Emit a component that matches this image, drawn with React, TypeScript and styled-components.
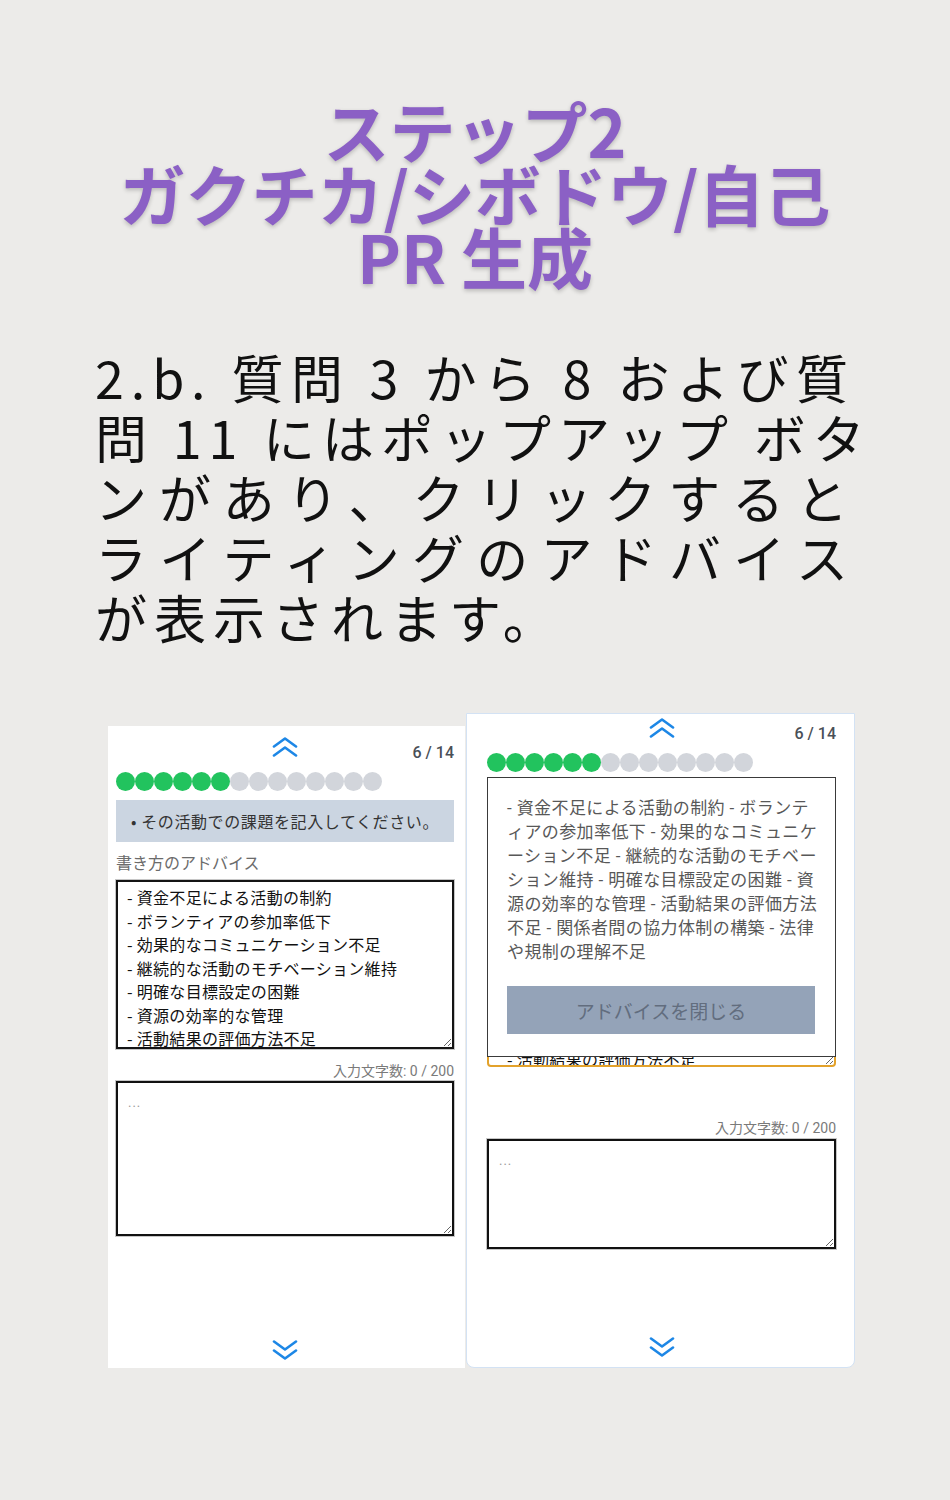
import styled, { createGlobalStyle } from 'styled-components';

const GlobalStyle = createGlobalStyle`
  body{
    margin:0;
    background:#ecebe9;
  }
`

const Page = styled.div`
  width:950px;
  min-height:1500px;
  box-sizing:border-box;
  padding-top:98px;
  font-family:"Noto Sans CJK JP", sans-serif;
`

const Title = styled.h1`
  margin:0;
  text-align:center;
  font-size:66px;
  line-height:63px;
  font-weight:700;
  color:#8b60c5;
  text-shadow:0 2px 4px rgba(0,0,0,0.22);
`

const Lead = styled.div`
  width:760px;
  margin:60px 0 0 95px;
  font-size:52px;
  line-height:60px;
  font-weight:400;
  letter-spacing:7px;
  color:#111;
`

const LeadLine = styled.div<{ $last?: boolean }>`
  white-space:nowrap;
  text-align:${p => (p.$last ? 'left' : 'justify')};
  text-align-last:${p => (p.$last ? 'left' : 'justify')};
`

const Shots = styled.div`
  display:flex;
  align-items:flex-end;
  gap:1px;
  margin:66px 0 0 108px;
`

const Phone = styled.div<{ $framed?: boolean }>`
  display:flex;
  flex-direction:column;
  box-sizing:border-box;
  background:#fff;
  width:${p => (p.$framed ? '389px' : '357px')};
  height:${p => (p.$framed ? '655px' : '642px')};
  padding:${p => (p.$framed ? '4px 18px 10px 20px' : '11px 11px 8px 8px')};
  border:${p => (p.$framed ? '1px solid #d3e2f4' : 'none')};
  border-radius:${p => (p.$framed ? '0 0 8px 8px' : '0')};
  font-family:Roboto, "Noto Sans CJK JP", sans-serif;
`

const Header = styled.div`
  display:grid;
  grid-template-columns:1fr auto 1fr;
  align-items:start;
  height:30px;
`

const Step = styled.span`
  grid-column:3;
  justify-self:end;
  margin-top:7px;
  font-size:16px;
  line-height:18px;
  font-weight:500;
  color:#4a4f57;
`

const Chevron = styled.svg`
  display:block;
  grid-column:2;
  width:26px;
  height:20px;
  fill:none;
  stroke:#1d87e6;
  stroke-width:2.6;
  stroke-linecap:round;
  stroke-linejoin:round;
`

const Footer = styled.div`
  margin-top:auto;
  display:flex;
  justify-content:center;
`

const Dots = styled.div`
  display:flex;
  margin-top:5px;
`

const Dot = styled.span<{ $on: boolean }>`
  width:19px;
  height:19px;
  border-radius:50%;
  background:${p => (p.$on ? '#22c35e' : '#d2d5db')};
`

const Stage = styled.div`
  position:relative;
  margin-top:5px;
  padding-top:41px;
  display:flex;
  flex-direction:column;
`

const Question = styled.div<{ $gap: number }>`
  margin-top:${p => p.$gap}px;
  height:42px;
  display:flex;
  align-items:center;
  justify-content:center;
  background:#cbd5e1;
  font-family:"Noto Sans CJK JP", sans-serif;
  font-size:16px;
  letter-spacing:0.6px;
  color:#333;
`

const Label = styled.div`
  margin-top:10px;
  font-family:"Noto Sans CJK JP", sans-serif;
  font-size:16px;
  line-height:20px;
  color:#6b6b6b;
`

const Advice = styled.textarea<{ $focus?: boolean }>`
  display:block;
  box-sizing:border-box;
  margin-top:8px;
  width:100%;
  height:169px;
  padding:${p => (p.$focus ? '7px 18px' : '4px 9px')};
  border:2px solid ${p => (p.$focus ? '#e3a22b' : '#141414')};
  border-radius:${p => (p.$focus ? '4px' : '0')};
  box-shadow:${p => (p.$focus ? 'none' : '0 0 0 1px #c6c6c6')};
  overflow:hidden;
  font-family:"Noto Sans CJK JP", sans-serif;
  font-size:16px;
  line-height:23.5px;
  letter-spacing:0.3px;
  color:#111;
  background:#fff;
  &:focus{ outline:0; }
`

const Count = styled.div<{ $gap: number }>`
  margin-top:${p => p.$gap}px;
  text-align:right;
  font-size:14px;
  line-height:18px;
  color:#7a7a7a;
`

const Input = styled.textarea<{ $h: number; $gap: number }>`
  display:block;
  box-sizing:border-box;
  margin-top:${p => p.$gap}px;
  width:100%;
  height:${p => p.$h}px;
  padding:12px 10px;
  border:2px solid #111;
  box-shadow:0 0 0 1px #c6c6c6;
  font-family:Roboto, sans-serif;
  font-size:13px;
  line-height:16px;
  letter-spacing:1px;
  background:#fff;
  &::placeholder{ color:#9a9a9a; }
  &:focus{ outline:0; }
`

const Modal = styled.div`
  position:absolute;
  top:0;
  left:0;
  right:0;
  height:280px;
  box-sizing:border-box;
  padding:18px 20px 22px 19px;
  background:#fff;
  border:1px solid #3a3a3a;
  font-family:Roboto, "Noto Sans CJK JP", sans-serif;
`

const ModalText = styled.div`
  font-size:17px;
  line-height:24px;
  letter-spacing:0.4px;
  color:#585858;
  span{
    display:block;
    white-space:nowrap;
  }
`

const CloseButton = styled.button`
  display:block;
  width:100%;
  height:48px;
  margin-top:22px;
  border:0;
  background:#94a3b8;
  font-family:"Noto Sans CJK JP", sans-serif;
  font-size:19px;
  color:#626d7e;
  cursor:pointer;
`

const ADVICE = [
  '- 資金不足による活動の制約',
  '- ボランティアの参加率低下',
  '- 効果的なコミュニケーション不足',
  '- 継続的な活動のモチベーション維持',
  '- 明確な目標設定の困難',
  '- 資源の効率的な管理',
  '- 活動結果の評価方法不足',
  '- 関係者間の協力体制の構築',
  '- 法律や規制の理解不足',
]

const MODAL_LINES = [
  '- 資金不足による活動の制約 - ボランテ',
  'ィアの参加率低下 - 効果的なコミュニケ',
  'ーション不足 - 継続的な活動のモチベー',
  'ション維持 - 明確な目標設定の困難 - 資',
  '源の効率的な管理 - 活動結果の評価方法',
  '不足 - 関係者間の協力体制の構築 - 法律',
  'や規制の理解不足',
]

const LEAD = [
  '2.b. 質問 3 から 8 および質',
  '問 11 にはポップアップ ボタ',
  'ンがあり、クリックすると',
  'ライティングのアドバイス',
  'が表示されます。',
]

const Arrows = ({ down }: { down?: boolean }) => (
  <Chevron viewBox="0 0 26 20">
    {down ? (
      <>
        <polyline points="2,1.5 13,9.5 24,1.5" />
        <polyline points="2,10.5 13,18.5 24,10.5" />
      </>
    ) : (
      <>
        <polyline points="2,9.5 13,1.5 24,9.5" />
        <polyline points="2,18.5 13,10.5 24,18.5" />
      </>
    )}
  </Chevron>
)

const Progress = () => (
  <Dots>
    {Array.from({ length: 14 }).map((_, i) => (
      <Dot key={i} $on={i < 6} />
    ))}
  </Dots>
)

const Top = () => (
  <Header>
    <Arrows />
    <Step>6 / 14</Step>
  </Header>
)

const QUESTION = '• その活動での課題を記入してください。'

export default function App() {
  return (
    <>
      <GlobalStyle />
      <Page>
        <Title>
          ステップ2
          <br />
          ガクチカ/シボドウ/自己
          <br />
          PR 生成
        </Title>

        <Lead>
          {LEAD.map((line, i) => (
            <LeadLine key={i} $last={i === LEAD.length - 1}>{line}</LeadLine>
          ))}
        </Lead>

        <Shots>
          {/* before: advice shown inline */}
          <Phone>
            <Top />
            <Progress />
            <Question $gap={9}>{QUESTION}</Question>
            <Label>書き方のアドバイス</Label>
            <Advice readOnly value={ADVICE.slice(0, 7).join('\n')} />
            <Count $gap={13}>入力文字数: 0 / 200</Count>
            <Input $h={155} $gap={1} placeholder="..." />
            <Footer>
              <Arrows down />
            </Footer>
          </Phone>

          {/* after: popup open */}
          <Phone $framed>
            <Top />
            <Progress />
            <Stage>
              <Question $gap={0}>{QUESTION}</Question>
              <Label>書き方のアドバイス</Label>
              <Advice $focus readOnly value={ADVICE.slice(0, 7).join('\n')} />
              <Modal>
                <ModalText>
                  {MODAL_LINES.map((l, i) => (
                    <span key={i}>{l}</span>
                  ))}
                </ModalText>
                <CloseButton>アドバイスを閉じる</CloseButton>
              </Modal>
            </Stage>
            <Count $gap={52}>入力文字数: 0 / 200</Count>
            <Input $h={110} $gap={2} placeholder="..." />
            <Footer>
              <Arrows down />
            </Footer>
          </Phone>
        </Shots>
      </Page>
    </>
  )
}
